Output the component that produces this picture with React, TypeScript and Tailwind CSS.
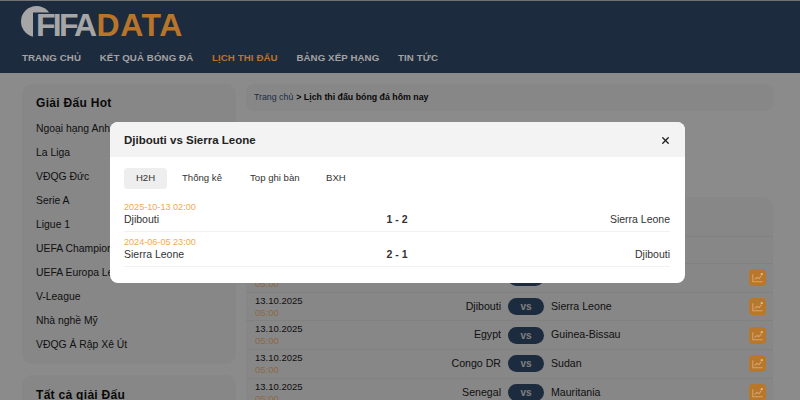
import { X } from 'lucide-react';

const navItems = ['TRANG CHỦ', 'KẾT QUẢ BÓNG ĐÁ', 'LỊCH THI ĐẤU', 'BẢNG XẾP HẠNG', 'TIN TỨC'];

const hotLeagues = [
  'Ngoại hạng Anh',
  'La Liga',
  'VĐQG Đức',
  'Serie A',
  'Ligue 1',
  'UEFA Champions League',
  'UEFA Europa League',
  'V-League',
  'Nhà nghề Mỹ',
  'VĐQG Ả Rập Xê Út',
];

const fixtures = [
  { home: 'Mali', away: 'Madagascar' },
  { home: 'Djibouti', away: 'Sierra Leone' },
  { home: 'Egypt', away: 'Guinea-Bissau' },
  { home: 'Congo DR', away: 'Sudan' },
  { home: 'Senegal', away: 'Mauritania' },
];

const h2hRows = [
  { date: '2025-10-13 02:00', home: 'Djibouti', score: '1 - 2', away: 'Sierra Leone' },
  { date: '2024-06-05 23:00', home: 'Sierra Leone', score: '2 - 1', away: 'Djibouti' },
];

const tabs = ['Thống kê', 'Top ghi bàn', 'BXH'];

function StatsIcon() {
  return (
    <svg viewBox="0 0 18 18" className="relative z-20 h-[17px] w-[17px] rounded-[4px] bg-[#b97829]" fill="none">
      <path d="M4 5.5v8h10.5" stroke="#d3a476" strokeWidth="1.1" />
      <path d="M6 11l2.5-2 2 1.2 2.5-3" stroke="#d3a476" strokeWidth="1.1" />
      <circle cx="13.5" cy="5.5" r="1.2" fill="#dfba94" />
    </svg>
  );
}

function Logo() {
  return (
    <div className="relative flex h-[31px] items-end pb-px pl-[15px] text-[32px] leading-[22px] font-bold">
      <svg viewBox="0 0 31 31" className="absolute top-0 left-0 h-[31px] w-[31px]">
        <circle cx="15.5" cy="15.5" r="15.5" fill="#a6a6a6" />
        <rect x="12" y="6.5" width="20" height="25" fill="#1d2d42" />
      </svg>
      <span className="relative tracking-[-2.7px] text-[#a6a6a6]">FIFA</span>
      <span className="relative ml-[2px] tracking-[0.6px] text-[#b8752a]">DATA</span>
    </div>
  );
}

function FixtureRow({ home, away }: { home: string; away: string }) {
  return (
    <div className="flex h-[28.7px] items-center border-b border-[#ececec] pr-[7px] pl-[9px]">
      <div className="w-[100px] text-[9.5px] leading-[12px]">
        <div className="text-[#222]">13.10.2025</div>
        <div className="text-[#ffc080]">05:00</div>
      </div>
      <div className="flex-1 text-right text-[10.6px] text-[#222]">{home}</div>
      <div className="mx-[7px] flex h-[17px] w-[36px] items-center justify-center rounded-full bg-[#354f72] text-[10px] font-bold text-[#e5e5e5]">
        vs
      </div>
      <div className="w-[198px] text-[10.6px] text-[#222]">{away}</div>
      <StatsIcon />
    </div>
  );
}

export default function App() {
  return (
    <div className="relative h-[400px] w-[800px] overflow-hidden bg-[#fdfdfd] font-['Liberation_Sans',sans-serif]">
      <header className="h-[73px] border-t border-[#d0d0d0] bg-[#354f72] px-[21px] pt-[5px]">
        <div className="relative z-20">
          <Logo />
          <nav className="mt-[14px] flex gap-[18.7px] pl-px text-[9.7px] font-bold tracking-[0.1px] text-[#a3a3a3]">
            {navItems.map((item) => (
              <span key={item} className={item === 'LỊCH THI ĐẤU' ? 'text-[#b8752a]' : ''}>
                {item}
              </span>
            ))}
          </nav>
        </div>
      </header>

      <main className="flex gap-[10px] pt-[11px] pl-[22px]">
        <aside className="flex w-[214px] flex-col gap-[11px]">
          <section className="h-[280px] rounded-[10px] bg-[#f6f6f6] pt-[12px] pl-[14px]">
            <h2 className="text-[12px] leading-[15px] font-bold tracking-[0.3px] text-[#111]">Giải Đấu Hot</h2>
            <ul className="mt-[6px] text-[10.4px] text-[#222]">
              {hotLeagues.map((league) => (
                <li key={league} className="flex h-[24px] items-center whitespace-nowrap">
                  {league}
                </li>
              ))}
            </ul>
          </section>
          <section className="h-[60px] rounded-[10px] bg-[#f6f6f6] pt-[13px] pl-[14px]">
            <h2 className="text-[12px] leading-[15px] font-bold tracking-[0.3px] text-[#111]">Tất cả giải Đấu</h2>
          </section>
        </aside>

        <div className="flex w-[527px] flex-col">
          <div className="flex h-[27px] items-center gap-[3px] rounded-[8px] bg-[#f6f6f6] pl-[8px] text-[8.8px]">
            <span className="text-[#34527a]">Trang chủ</span>
            <span className="font-bold text-[#111]">&gt; Lịch thi đấu bóng đá hôm nay</span>
          </div>
          <section className="mt-[86px] rounded-[10px] bg-[#f6f6f6]">
            <div className="h-[40px] border-b border-[#ececec]" />
            <div className="h-[27px] border-b border-[#ececec]" />
            {fixtures.map((fixture) => (
              <FixtureRow key={fixture.home} home={fixture.home} away={fixture.away} />
            ))}
          </section>
        </div>
      </main>

      {/* modal backdrop */}
      <div className="absolute inset-0 z-10 bg-black/45 pt-[122px] pl-[110px]">
        <div className="w-[575px] overflow-hidden rounded-[8px] bg-white">
          <div className="flex h-[35px] items-center justify-between bg-[#f3f3f3] px-[14px] pt-[2px]">
            <h3 className="text-[11.5px] font-bold text-[#222]">Djibouti vs Sierra Leone</h3>
            <X size={11} strokeWidth={3} className="text-[#222]" />
          </div>
          <div className="pt-[11px] pr-[15px] pb-[16px] pl-[14px]">
            <div className="flex items-center text-[9.6px] text-[#333]">
              <div className="flex h-[21px] w-[43px] items-center justify-center rounded-[4px] bg-[#eeeeee]">H2H</div>
              <div className="ml-[15px] w-[68px]">{tabs[0]}</div>
              <div className="w-[76px]">{tabs[1]}</div>
              <div>{tabs[2]}</div>
            </div>
            <div className="mt-[8px]">
              {h2hRows.map((row) => (
                <div key={row.date} className="h-[35px] border-b border-[#f1f1f1] pt-[4px]">
                  <div className="text-[9.1px] leading-[12px] text-[#f3a94f]">{row.date}</div>
                  <div className="grid grid-cols-[1fr_auto_1fr] text-[10.5px] leading-[13px] text-[#333]">
                    <span>{row.home}</span>
                    <span className="font-bold">{row.score}</span>
                    <span className="text-right">{row.away}</span>
                  </div>
                </div>
              ))}
            </div>
          </div>
        </div>
      </div>
    </div>
  );
}
